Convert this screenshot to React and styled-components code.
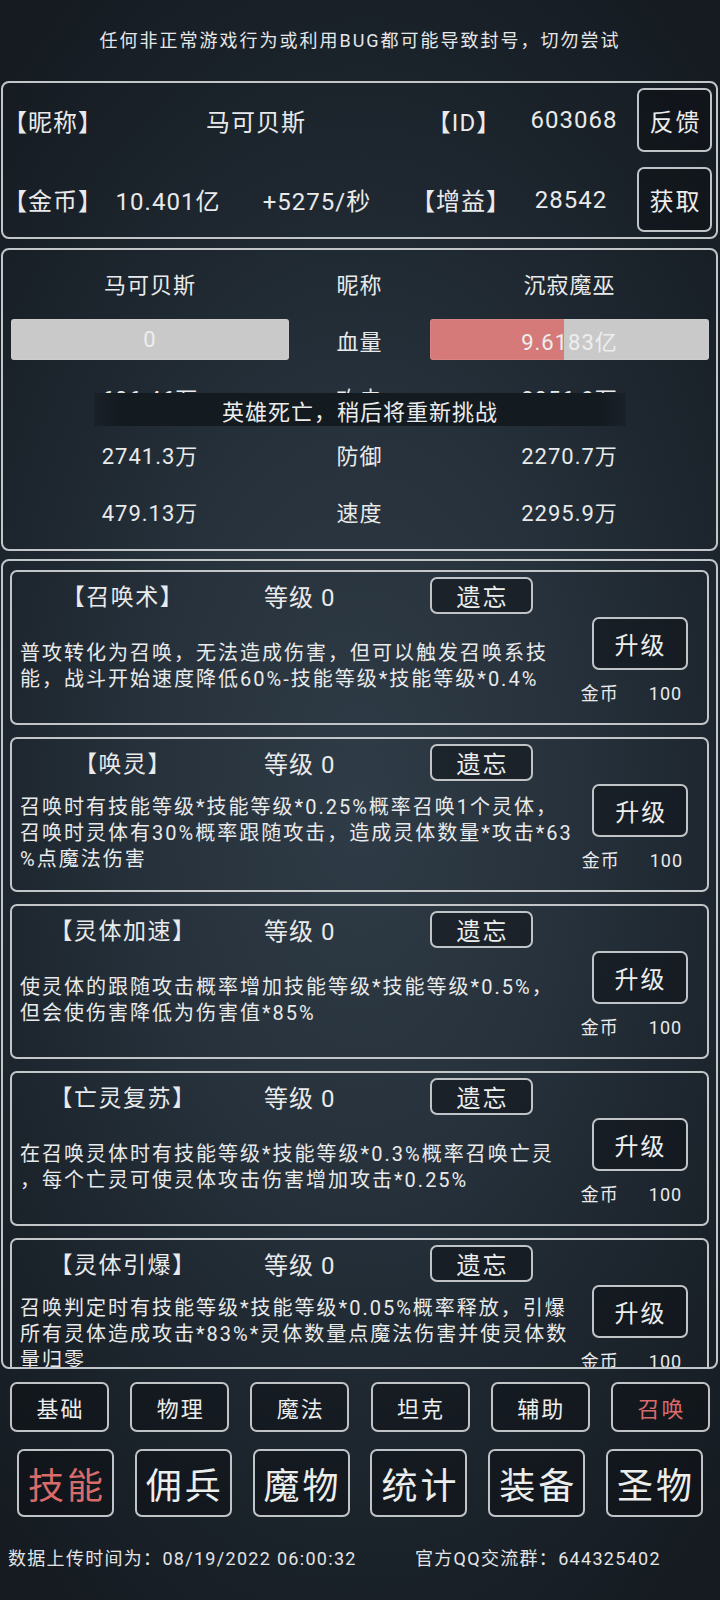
import React from "react";
import styled, { createGlobalStyle } from "styled-components";

const Global = createGlobalStyle`
  html, body { margin: 0; padding: 0; background: #161d23; }
  #root { width: 720px; min-height: 1600px; }
  * { box-sizing: border-box; }
`;

const FONT = `Roboto, "Noto Sans CJK SC", "Noto Sans", sans-serif`;

const Page = styled.div`
  width: 720px;
  height: 1600px;
  overflow: hidden;
  display: flex;
  flex-direction: column;
  font-family: ${FONT};
  color: #e9eaeb;
  background: radial-gradient(ellipse 75% 60% at 50% 50%, #2f3b46 0%, #26313b 40%, #1b232b 75%, #151b21 100%);
`;

const Notice = styled.div`
  height: 78px;
  margin-bottom: 3px;
  display: flex;
  align-items: center;
  justify-content: center;
  font-size: 18px;
  letter-spacing: 2px;
  color: #e6e7e8;
`;

const Panel = styled.section`
  position: relative;
  margin: ${(p) => p.$mt || 0}px 2px 0 1px;
  height: ${(p) => p.$h}px;
  border: 2px solid #c3c6c9;
  border-radius: 8px;
  padding: ${(p) => p.$pad};
  overflow: hidden;
`;

const InfoRow = styled.div`
  display: flex;
  align-items: center;
  height: ${(p) => p.$h}px;
  margin-top: ${(p) => p.$mt || 0}px;
  font-size: 24px;
  letter-spacing: 1px;
`;

const Cell = styled.div`
  width: ${(p) => p.$w}px;
  text-align: center;
  white-space: nowrap;
`;

const Spacer = styled.div`
  flex: 1;
`;

const OutlineButton = styled.div`
  display: flex;
  align-items: center;
  justify-content: center;
  width: ${(p) => p.$w}px;
  height: ${(p) => p.$h}px;
  border: 2px solid #c1c4c7;
  border-radius: 7px;
  background: rgba(10, 14, 18, 0.45);
  font-size: ${(p) => p.$fs || 24}px;
  letter-spacing: ${(p) => p.$ls ?? 2}px;
  padding-left: ${(p) => p.$ls ?? 2}px;
  color: ${(p) => (p.$active ? "#d96b6b" : "#eceded")};
  white-space: nowrap;
  flex: none;
`;

const BattleRow = styled.div`
  display: grid;
  grid-template-columns: 278px 141px 279px;
  align-items: center;
  height: 57px;
  font-size: 22px;
  letter-spacing: 1px;
`;

const Center = styled.div`
  text-align: center;
  white-space: nowrap;
`;

const Bar = styled.div`
  height: 41px;
  border-radius: 3px;
  display: flex;
  align-items: center;
  justify-content: center;
  color: #eeeeee;
  font-size: 22px;
  background: linear-gradient(
    to right,
    #d67a79 0%,
    #d67a79 ${(p) => p.$pct}%,
    #c9c9c9 ${(p) => p.$pct}%,
    #c9c9c9 100%
  );
  box-shadow: inset 0 0 0 1px rgba(255, 255, 255, 0.08);
`;

const Toast = styled.div`
  position: absolute;
  left: 91px;
  top: 143px;
  width: 532px;
  height: 33px;
  display: flex;
  align-items: center;
  justify-content: center;
  font-size: 22px;
  letter-spacing: 1px;
  color: #ecedee;
  background: linear-gradient(
    to right,
    #1a2128 0%,
    #131a20 5%,
    #131a20 95%,
    #1a2128 100%
  );
`;

const CardList = styled.div`
  display: flex;
  flex-direction: column;
  gap: 12px;
`;

const Card = styled.div`
  flex: none;
  height: 155px;
  border: 2px solid #c3c6c9;
  border-radius: 7px;
  display: grid;
  grid-template-columns: 1fr 135px;
  grid-template-rows: 46px 1fr;
`;

const TitleRow = styled.div`
  grid-column: 1;
  grid-row: 1;
  display: flex;
  align-items: center;
`;

const SkillName = styled.div`
  width: 222px;
  text-align: center;
  font-size: 23px;
  letter-spacing: 1.5px;
  white-space: nowrap;
`;

const Level = styled.div`
  width: 166px;
  margin-left: 30px;
  font-size: 24px;
  letter-spacing: 1px;
  white-space: nowrap;
`;

const Desc = styled.div`
  grid-column: 1;
  grid-row: 2;
  display: flex;
  flex-direction: column;
  justify-content: center;
  padding: 0 0 9px 8px;
  font-size: 20px;
  letter-spacing: 2px;
  line-height: 26px;
`;

const DescLine = styled.div`
  white-space: nowrap;
`;

const Side = styled.div`
  grid-column: 2;
  grid-row: 1 / 3;
  display: flex;
  flex-direction: column;
  align-items: center;
  padding-top: 45px;
`;

const Cost = styled.div`
  display: flex;
  gap: 30px;
  margin-top: 12px;
  padding-right: 16px;
  font-size: 18px;
  line-height: 24px;
  letter-spacing: 1px;
  white-space: nowrap;
`;

const TabRow = styled.nav`
  display: flex;
  justify-content: space-between;
  margin-top: ${(p) => p.$mt}px;
  padding: 0 ${(p) => p.$px}px;
`;

const Footer = styled.footer`
  display: grid;
  grid-template-columns: 407px auto;
  margin-top: 30px;
  padding-left: 8px;
  height: 24px;
  line-height: 24px;
  font-size: 18px;
  letter-spacing: 1.3px;
  color: #e3e4e5;
  white-space: nowrap;
`;

const skills = [
  {
    name: "【召唤术】",
    lines: [
      "普攻转化为召唤，无法造成伤害，但可以触发召唤系技",
      "能，战斗开始速度降低60%-技能等级*技能等级*0.4%",
    ],
  },
  {
    name: "【唤灵】",
    lines: [
      "召唤时有技能等级*技能等级*0.25%概率召唤1个灵体，",
      "召唤时灵体有30%概率跟随攻击，造成灵体数量*攻击*63",
      "%点魔法伤害",
    ],
  },
  {
    name: "【灵体加速】",
    lines: ["使灵体的跟随攻击概率增加技能等级*技能等级*0.5%，", "但会使伤害降低为伤害值*85%"],
  },
  {
    name: "【亡灵复苏】",
    lines: ["在召唤灵体时有技能等级*技能等级*0.3%概率召唤亡灵", "，每个亡灵可使灵体攻击伤害增加攻击*0.25%"],
  },
  {
    name: "【灵体引爆】",
    lines: [
      "召唤判定时有技能等级*技能等级*0.05%概率释放，引爆",
      "所有灵体造成攻击*83%*灵体数量点魔法伤害并使灵体数",
      "量归零",
    ],
  },
];

const stats = [
  { l: "606.46万", k: "攻击", r: "2056.9万" },
  { l: "2741.3万", k: "防御", r: "2270.7万" },
  { l: "479.13万", k: "速度", r: "2295.9万" },
];

const categories = ["基础", "物理", "魔法", "坦克", "辅助", "召唤"];
const mainTabs = ["技能", "佣兵", "魔物", "统计", "装备", "圣物"];

export default function App() {
  return (
    <Page>
      <Global />
      <Notice>任何非正常游戏行为或利用BUG都可能导致封号，切勿尝试</Notice>

      <Panel $h={158} $pad="5px 4px 5px 0">
        <InfoRow $h={64}>
          <Cell $w={98}>【昵称】</Cell>
          <Cell $w={310}>马可贝斯</Cell>
          <Cell $w={106}>【ID】</Cell>
          <Cell $w={114}>603068</Cell>
          <Spacer />
          <OutlineButton $w={75} $h={64}>反馈</OutlineButton>
        </InfoRow>
        <InfoRow $h={65} $mt={15}>
          <Cell $w={98}>【金币】</Cell>
          <Cell $w={134}>10.401亿</Cell>
          <Cell $w={164}>+5275/秒</Cell>
          <Cell $w={124}>【增益】</Cell>
          <Cell $w={96}>28542</Cell>
          <Spacer />
          <OutlineButton $w={75} $h={65}>获取</OutlineButton>
        </InfoRow>
      </Panel>

      <Panel $mt={9} $h={303} $pad="4px 7px 0 8px">
        <BattleRow>
          <Center>马可贝斯</Center>
          <Center>昵称</Center>
          <Center>沉寂魔巫</Center>
        </BattleRow>
        <BattleRow>
          <Bar $pct={0}>0</Bar>
          <Center>血量</Center>
          <Bar $pct={48}>9.6183亿</Bar>
        </BattleRow>
        {stats.map((s) => (
          <BattleRow key={s.k}>
            <Center>{s.l}</Center>
            <Center>{s.k}</Center>
            <Center>{s.r}</Center>
          </BattleRow>
        ))}
        <Toast>英雄死亡，稍后将重新挑战</Toast>
      </Panel>

      <Panel $mt={8} $h={810} $pad="9px 7px 0 7px">
        <CardList>
          {skills.map((s) => (
            <Card key={s.name}>
              <TitleRow>
                <SkillName>{s.name}</SkillName>
                <Level>等级 0</Level>
                <OutlineButton $w={103} $h={37}>遗忘</OutlineButton>
              </TitleRow>
              <Desc>
                {s.lines.map((ln, i) => (
                  <DescLine key={i}>{ln}</DescLine>
                ))}
              </Desc>
              <Side>
                <OutlineButton $w={96} $h={53}>升级</OutlineButton>
                <Cost>
                  <span>金币</span>
                  <span>100</span>
                </Cost>
              </Side>
            </Card>
          ))}
        </CardList>
      </Panel>

      <TabRow $mt={13} $px={10}>
        {categories.map((c) => (
          <OutlineButton key={c} $w={99} $h={50} $fs={22} $active={c === "召唤"}>
            {c}
          </OutlineButton>
        ))}
      </TabRow>

      <TabRow $mt={17} $px={17}>
        {mainTabs.map((c) => (
          <OutlineButton key={c} $w={97} $h={68} $fs={36} $ls={3} $active={c === "技能"}>
            {c}
          </OutlineButton>
        ))}
      </TabRow>

      <Footer>
        <span>数据上传时间为：08/19/2022 06:00:32</span>
        <span>官方QQ交流群：644325402</span>
      </Footer>
    </Page>
  );
}
